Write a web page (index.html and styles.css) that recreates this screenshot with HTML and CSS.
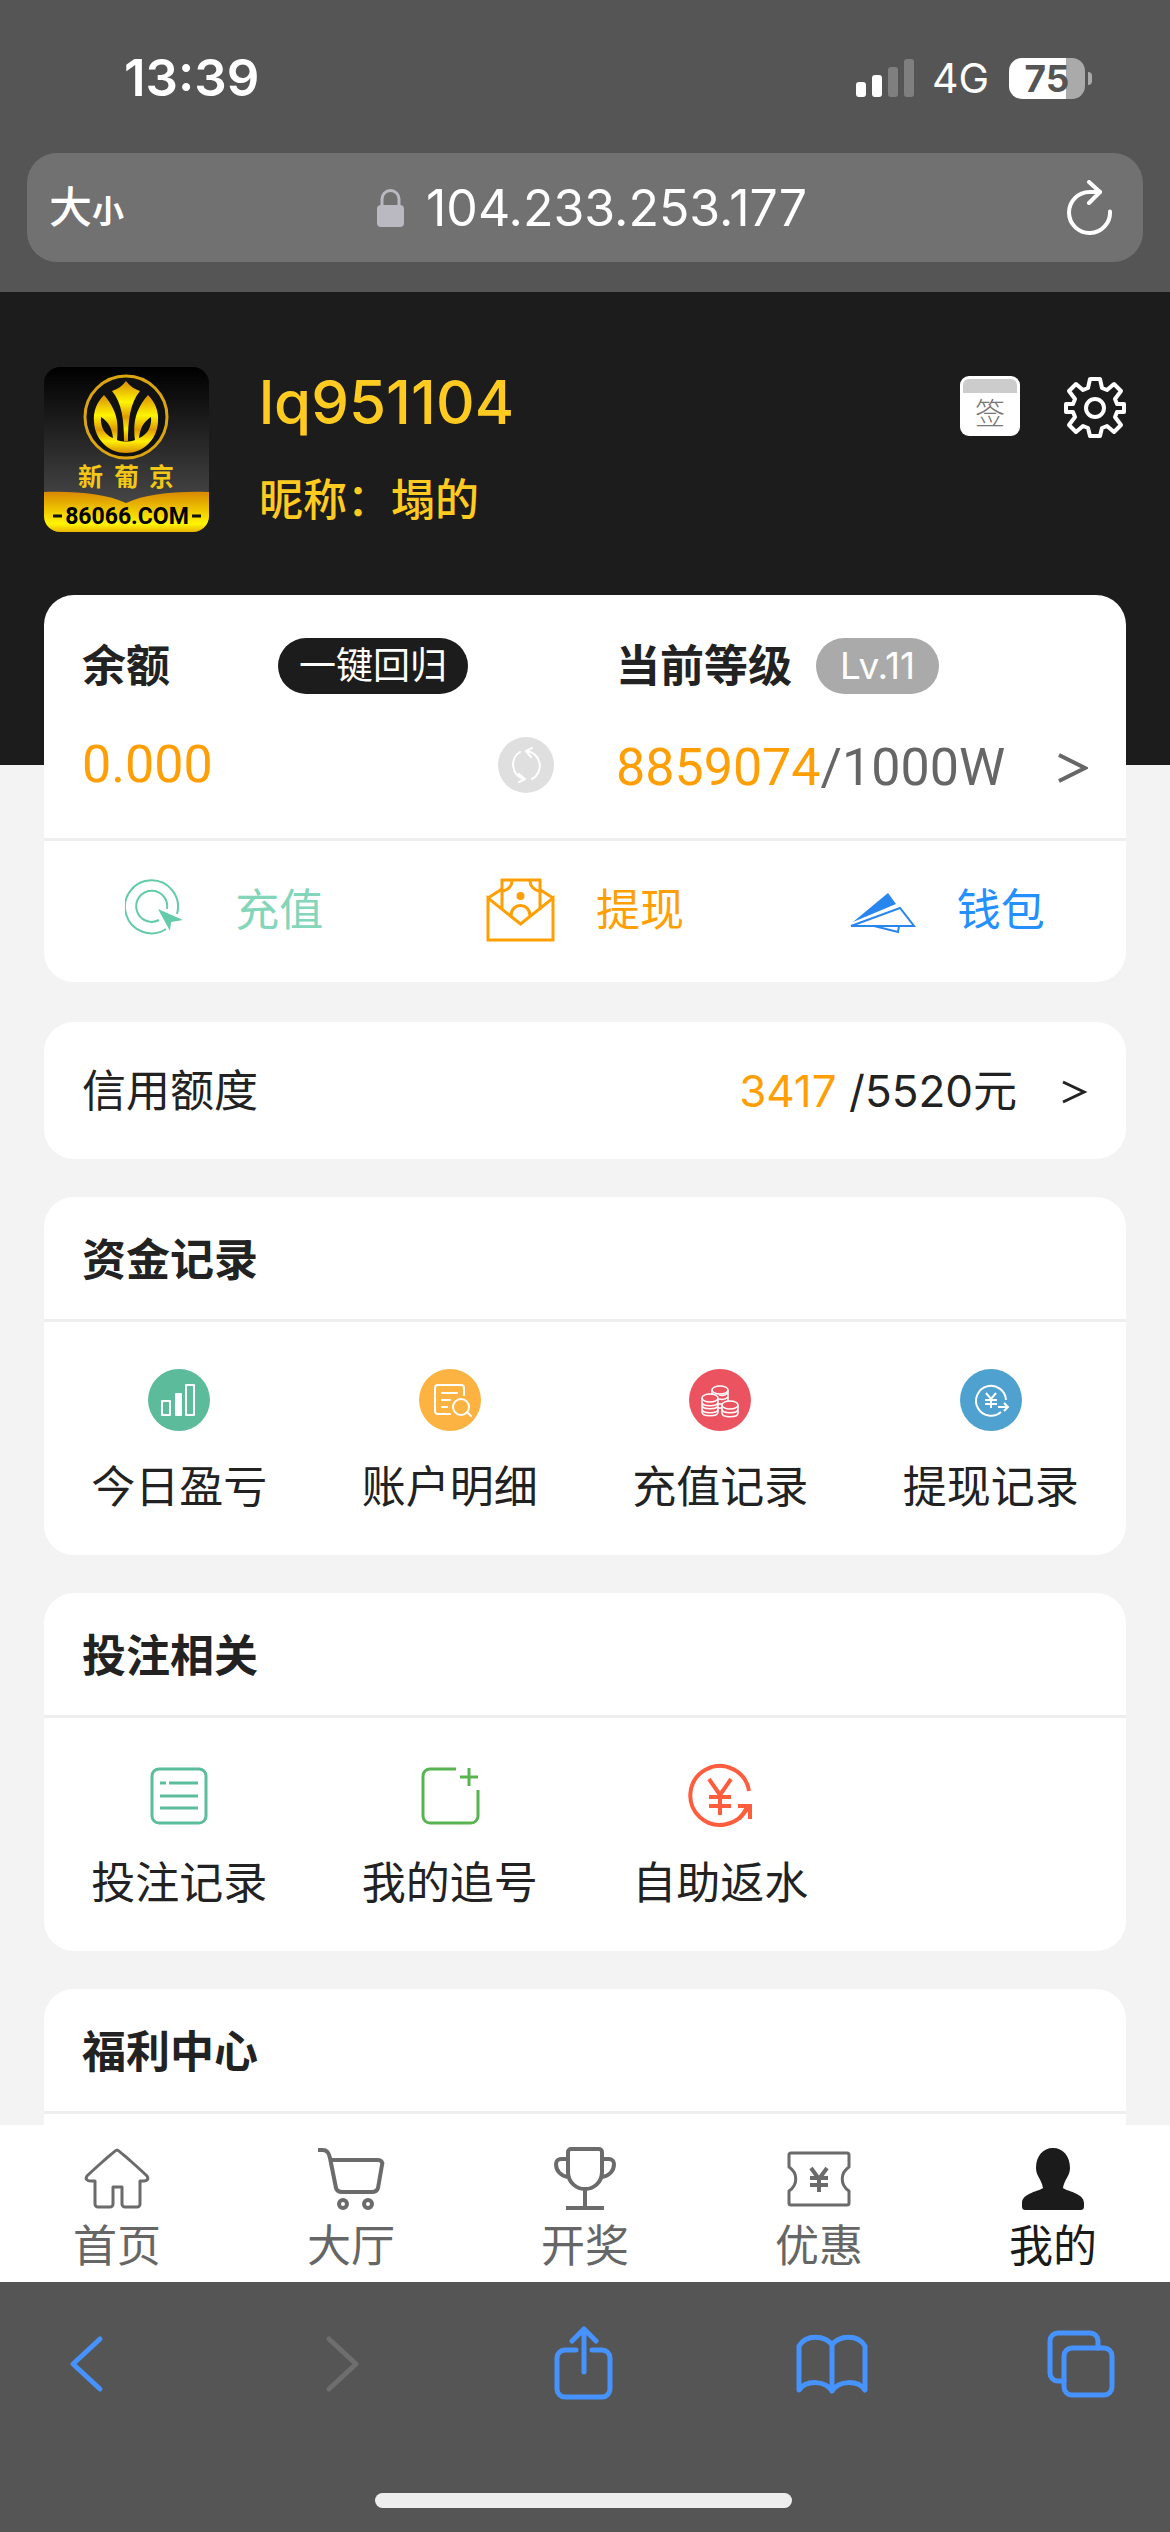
FILE: index.html
```html
<!DOCTYPE html>
<html lang="zh-CN">
<head>
  <meta charset="UTF-8">
  <meta name="viewport" content="width=device-width, initial-scale=1.0">
  <title>我的</title>
  <link rel="stylesheet" href="styles.css">
</head>
<body>

  <div class="browser-top">
    <div class="status-bar">
      <span class="time">13:39</span>
      <div class="status-right">
        <svg class="signal" viewBox="0 0 58 38" fill="#fff">
          <rect x="0" y="23" width="10" height="15" rx="3"/>
          <rect x="16" y="16" width="10" height="22" rx="3"/>
          <rect x="32" y="8" width="10" height="30" rx="3" opacity=".25"/>
          <rect x="48" y="0" width="10" height="38" rx="3" opacity=".25"/>
        </svg>
        <span class="network">4G</span>
        <span class="battery">75</span>
      </div>
    </div>

    <div class="address-bar">
      <button class="text-size" type="button">大<small>小</small></button>
      <label class="address">
        <svg class="lock" viewBox="0 0 27 40">
          <path d="M5 19v-8a8.500 8.500 0 0 1 17 0v8" fill="none" stroke="#bab9c1" stroke-width="3"/>
          <rect x="0" y="17" width="27" height="22" rx="4" fill="#bab9c1"/>
        </svg>
        <input type="text" value="104.233.253.177" aria-label="地址">
      </label>
      <button class="reload" type="button" aria-label="刷新">
        <svg viewBox="0 0 46 56" fill="none" stroke="#fff" stroke-width="4" stroke-linecap="round" stroke-linejoin="round">
          <path d="M43 31.500A20.500 20.500 0 1 1 22.500 12H33"/>
          <path d="M22 2l11 10-11 11"/>
        </svg>
      </button>
    </div>
  </div>

  <main>
    <header class="profile">
      <svg class="avatar" viewBox="0 0 165 165">
        <defs>
          <linearGradient id="night" x1="0" y1="0" x2="0" y2="1">
            <stop offset="0" stop-color="#000"/>
            <stop offset=".8" stop-color="#444"/>
          </linearGradient>
          <linearGradient id="gold" x1="0" y1="0" x2="0" y2="1">
            <stop offset="0" stop-color="#d98e00"/>
            <stop offset=".35" stop-color="#fff500"/>
            <stop offset=".6" stop-color="#e09a00"/>
            <stop offset=".8" stop-color="#fff000"/>
            <stop offset="1" stop-color="#d98e00"/>
          </linearGradient>
          <linearGradient id="ribbon" x1="0" y1="0" x2="0" y2="1">
            <stop offset="0" stop-color="#d98900"/>
            <stop offset=".8" stop-color="#fff500"/>
            <stop offset="1" stop-color="#e8b400"/>
          </linearGradient>
        </defs>
        <rect width="165" height="165" fill="url(#night)"/>
        <circle cx="82" cy="50" r="41" fill="#111" stroke="#dba510" stroke-width="3"/>
        <path fill="url(#gold)" d="M82 14c4 5 8 8 14 10-10 12-12 30-12 50h-4c0-20-2-38-12-50 6-2 10-5 14-10z"/>
        <path fill="url(#gold)" fill-rule="evenodd" d="M60 28c-7 7-11 16-10 27 1 18 15 31 32 31s31-13 32-31c1-11-3-20-10-27-13 15-15 28-13 45-5 2-13 2-18 0 2-17 0-30-13-45zM57 50c8 5 11 12 12 21-8-3-13-11-12-21zM107 50c-8 5-11 12-12 21 8-3 13-11 12-21z"/>
        <g fill="#f2c715" class="logo-name">
          <text x="34" y="119">新</text>
          <text x="70" y="119">葡</text>
          <text x="105" y="119">京</text>
        </g>
        <path fill="url(#ribbon)" d="M0 125c35-1 62 2 82 11 20-9 47-12 83-11v40H0z"/>
        <path stroke="#111" stroke-width="3" d="M9 149h9M148 149h9"/>
        <text class="logo-site" x="83" y="157" text-anchor="middle">86066.COM</text>
      </svg>
      <div class="profile-text">
        <h1>lq951104</h1>
        <p>昵称：塌的</p>
      </div>
      <div class="profile-actions">
        <button class="sign" type="button"><span>签</span></button>
        <button class="settings" type="button" aria-label="设置">
          <svg viewBox="0 0 62 62" fill="none" stroke="#fff" stroke-width="4" stroke-linejoin="round">
            <path d="M26 3h10l2 9 5 2 7-6 7 7-6 8 2 5h7v8h-7l-2 5 6 8-7 7-7-6-5 2-2 8H26l-2-8-5-2-7 6-7-7 6-8-2-5H2v-8h7l2-5-6-8 7-7 7 6 5-2z"/>
            <circle cx="31" cy="32" r="9"/>
          </svg>
        </button>
      </div>
    </header>

    <section class="card balance">
      <div class="balance-grid">
        <div class="row">
          <h2>余额</h2>
          <button class="pill pill-dark" type="button">一键回归</button>
        </div>
        <div class="row level">
          <h2>当前等级</h2>
          <span class="pill pill-gray">Lv.11</span>
        </div>
        <div class="row spread">
          <span class="amount orange">0.000</span>
          <button class="refresh" type="button" aria-label="刷新余额">
            <svg viewBox="0 0 56 56" fill="none" stroke="#fff" stroke-width="2" stroke-linecap="round" stroke-linejoin="round">
              <path d="M22 15a15 15 0 0 0 4 27M34 42a15 15 0 0 0-5-28M21 37l6 5-6 3M34 11l-6 3 5 6"/>
            </svg>
          </button>
        </div>
        <a class="row spread progress" href="#">
          <span class="amount"><span class="orange">8859074</span>/1000W</span>
          <svg class="arrow" viewBox="0 0 30 30"><path d="M1 2l26 13L1 28"/></svg>
        </a>
      </div>
      <nav class="actions">
        <a class="green" href="#">
          <svg viewBox="0 0 70 64" fill="none" stroke="#62cba7" stroke-width="2">
            <path d="M41 51A26.500 26.500 0 1 1 52 36"/>
            <path d="M34 42A15.500 15.500 0 1 1 42 31"/>
            <path fill="#62cba7" stroke="none" d="M33 31l25 11-12 2-1 9z"/>
          </svg>
          充值
        </a>
        <a class="orange" href="#">
          <svg viewBox="0 0 70 64" fill="none" stroke="#ff9f05" stroke-width="3">
            <path d="M2 20v42h65V20L34.500 46zM2 20l14-9M67 20l-14-9M16 32V2h38v30"/>
            <path d="M26 3c0 5-4 9-9 10M44 3c0 5 4 9 9 10M25 38c0-14 19-14 19 0"/>
            <circle cx="34.500" cy="18" r="4" fill="#ff9f05" stroke="none"/>
          </svg>
          提现
        </a>
        <a class="blue" href="#">
          <svg viewBox="0 0 70 64" fill="none" stroke="#2a86ef" stroke-width="2">
            <path fill="#2a86ef" stroke="none" d="M6 44L41 15l8 11z"/>
            <path d="M4 48l49-18 14 18zM27 48l24 6 1-6"/>
          </svg>
          钱包
        </a>
      </nav>
    </section>

    <a class="card credit" href="#">
      <span>信用额度</span>
      <span class="credit-value"><span class="orange">3417</span> /5520元</span>
      <svg class="arrow" viewBox="0 0 30 30"><path d="M5 6l21 10L5 26"/></svg>
    </a>

    <section class="card">
      <h2 class="card-title">资金记录</h2>
      <nav class="menu">
        <a href="#">
          <svg viewBox="0 0 64 64" fill="none" stroke="#fff" stroke-width="2">
            <circle cx="32" cy="32" r="31" fill="#5bbb9b" stroke="none"/>
            <path stroke-linejoin="round" d="M15 33h8v14h-8zM39 17h8v30h-8z"/>
            <rect x="28" y="25" width="7" height="23" rx="1" fill="#fff" stroke="none"/>
          </svg>
          今日盈亏
        </a>
        <a href="#">
          <svg viewBox="0 0 64 64" fill="none" stroke="#fff" stroke-width="2" stroke-linecap="round">
            <circle cx="32" cy="32" r="31" fill="#fcb342" stroke="none"/>
            <path d="M32 46H20a3 3 0 0 1-3-3V20a3 3 0 0 1 3-3h23a3 3 0 0 1 3 3v7M24 25h15M24 32h8M24 39h5M49 44l4 4"/>
            <circle cx="43" cy="39" r="8"/>
          </svg>
          账户明细
        </a>
        <a href="#">
          <svg viewBox="0 0 64 64" fill="none" stroke="#fff" stroke-width="1.500">
            <circle cx="32" cy="32" r="31" fill="#eb5360" stroke="none"/>
            <ellipse cx="32" cy="22" rx="8" ry="4"/>
            <ellipse cx="22" cy="30" rx="8" ry="4"/>
            <ellipse cx="42" cy="37" rx="8" ry="4"/>
            <path d="M24 22v4M40 22v11M31 27c4 1 7 0 9-2M31 31c4 1 7 0 9-2M14 30v14c0 5 16 5 16 0V30M14 34c0 5 16 5 16 0M14 37c0 5 16 5 16 0M14 41c0 5 16 5 16 0M34 37v8c0 5 16 5 16 0v-8M34 41c0 5 16 5 16 0M30 36h4M30 40h4"/>
          </svg>
          充值记录
        </a>
        <a href="#">
          <svg viewBox="0 0 64 64" fill="none" stroke="#fff" stroke-width="2">
            <circle cx="32" cy="32" r="31" fill="#4fa1d0" stroke="none"/>
            <path d="M42 44a15 15 0 1 1 5-12M39 39h10M45 35l4 4-4 4M27 25l5 6 5-6M32 31v9M26 32h12M26 36h12"/>
          </svg>
          提现记录
        </a>
      </nav>
    </section>

    <section class="card">
      <h2 class="card-title">投注相关</h2>
      <nav class="menu">
        <a href="#">
          <svg viewBox="0 0 64 64" fill="none" stroke="#5bbd9d" stroke-width="3">
            <rect x="5" y="5" width="54" height="54" rx="7"/>
            <path d="M13 19h6M22 19h29M13 32h38M13 44h38"/>
          </svg>
          投注记录
        </a>
        <a href="#">
          <svg viewBox="0 0 64 64" fill="none" stroke="#58b450" stroke-width="3">
            <path d="M38 5H12a7 7 0 0 0-7 7v40a7 7 0 0 0 7 7h41a7 7 0 0 0 7-7V26M42 13h18M51 4v18"/>
          </svg>
          我的追号
        </a>
        <a href="#">
          <svg viewBox="0 0 64 64" fill="none" stroke="#ff5d3d" stroke-width="4">
            <path d="M61 27A29.500 29.500 0 1 0 59 43"/>
            <path d="M50 42h12v13M61 43L51 55"/>
            <path stroke-width="4" d="M21 15l11 16 11-16M32 31v20M21 33h22M21 42h22"/>
          </svg>
          自助返水
        </a>
      </nav>
    </section>

    <section class="card">
      <h2 class="card-title">福利中心</h2>
      <nav class="menu"></nav>
    </section>
  </main>

  <nav class="tab-bar">
    <a href="#">
      <svg viewBox="0 0 68 64" fill="none" stroke="#6b6b6b" stroke-width="3" stroke-linejoin="round">
        <path d="M34 3c2 0 28 24 30 26 2 3 0 5-3 5h-4v23a3 3 0 0 1-3 3H42a3 3 0 0 1-3-3V40h-9v17a3 3 0 0 1-3 3H15a3 3 0 0 1-3-3V34H8c-4 0-6-2-4-5C6 27 32 3 34 3z"/>
      </svg>
      首页
    </a>
    <a href="#">
      <svg viewBox="0 0 68 64" fill="none" stroke="#6b6b6b" stroke-width="4" stroke-linejoin="round">
        <path d="M1 3h5c4 0 6 3 7 8l6 30c1 3 3 4 6 4h30c3 0 5-1 6-4l4-23c1-3-1-5-4-5H14"/>
        <circle cx="26" cy="57" r="4"/>
        <circle cx="51" cy="57" r="4"/>
      </svg>
      大厅
    </a>
    <a href="#">
      <svg viewBox="0 0 68 64" fill="none" stroke="#6b6b6b" stroke-width="4" stroke-linejoin="round">
        <path d="M20 2h28a3 3 0 0 1 3 3v20c0 11-9 17-17 17s-17-6-17-17V5a3 3 0 0 1 3-3zM17 12h-7a5 5 0 0 0-5 5c0 7 5 12 12 13M51 12h7a5 5 0 0 1 5 5c0 7-5 12-12 13M34 42v19M15 61h38"/>
      </svg>
      开奖
    </a>
    <a href="#">
      <svg viewBox="0 0 68 64" fill="none" stroke="#6b6b6b" stroke-width="3" stroke-linejoin="round">
        <path d="M6 6h56a2 2 0 0 1 2 2v12c-9 6-9 18 0 24v12a2 2 0 0 1-2 2H6a2 2 0 0 1-2-2V44c9-6 9-18 0-24V8a2 2 0 0 1 2-2z"/>
        <path stroke-width="4" d="M26 21l8 11 8-11M34 32v13M25 31h18M25 38h18"/>
      </svg>
      优惠
    </a>
    <a class="current" href="#">
      <svg viewBox="0 0 68 64" fill="#1b1b1b">
        <path d="M34 1c10 0 17 8 17 20 0 8-6 12-7 20 3 3 21 5 21 15v3c0 3-1 4-4 4H7c-3 0-4-1-4-4v-3c0-10 18-12 21-15-1-8-7-12-7-20C17 9 24 1 34 1z"/>
      </svg>
      我的
    </a>
  </nav>

  <footer class="browser-bottom">
    <div class="toolbar">
      <button type="button" aria-label="后退">
        <svg viewBox="0 0 72 76"><path d="M50 13L23 38l27 25"/></svg>
      </button>
      <button class="disabled" type="button" aria-label="前进" disabled>
        <svg viewBox="0 0 72 76"><path d="M30 13l27 25-27 25"/></svg>
      </button>
      <button type="button" aria-label="分享">
        <svg viewBox="0 0 72 76"><path d="M29 24H18a8 8 0 0 0-8 8v31a8 8 0 0 0 8 8h37a8 8 0 0 0 8-8V32a8 8 0 0 0-8-8H45M37 46V4M25 15L37 3l12 12"/></svg>
      </button>
      <button type="button" aria-label="书签">
        <svg viewBox="0 0 72 76"><path d="M36 19v46M36 19C29 9 10 8 3 20v44c7-10 26-10 33 1 7-11 26-11 33-1V20C62 8 43 9 36 19z"/></svg>
      </button>
      <button type="button" aria-label="标签页">
        <svg viewBox="0 0 72 76"><rect x="20" y="22" width="48" height="47" rx="8"/><path d="M20 55h-6a8 8 0 0 1-8-8V15a8 8 0 0 1 8-8h32a8 8 0 0 1 8 8v7"/></svg>
      </button>
    </div>
    <div class="home-indicator"></div>
  </footer>

</body>
</html>
```
FILE: styles.css
```css
* {
  box-sizing: border-box;
}

body {
  display: flex;
  flex-direction: column;
  height: 100vh;
  margin: 0;
  background-color: #f3f3f3;
  color: #222;
  font-family: Inter, "Noto Sans CJK SC", sans-serif;
  font-size: 44px;
  line-height: 60px;
}

h1, h2, p {
  margin: 0;
}

a {
  color: inherit;
  text-decoration: none;
}

button, input {
  padding: 0;
  border: none;
  background: none;
  color: inherit;
  font: inherit;
}

button {
  cursor: pointer;
}

svg {
  display: block;
  flex: none;
}

.orange {
  color: #ff9f05;
}

.green {
  color: #83d6b9;
}

.blue {
  color: #2490ff;
}

/* browser top */
.browser-top {
  flex: none;
  padding: 48px 27px 30px;
  background-color: #555;
  color: #fff;
}

.status-bar {
  display: flex;
  justify-content: space-between;
  align-items: center;
  padding: 0 58px 0 97px;
  margin-bottom: 45px;
}

.time {
  font-size: 51px;
  font-weight: 600;
}

.status-right {
  display: flex;
  align-items: center;
}

.signal {
  width: 58px;
  height: 38px;
}

.network {
  margin: 0 20px 0 18px;
  font-size: 41px;
}

.battery {
  position: relative;
  width: 76px;
  height: 41px;
  border-radius: 13px;
  background: linear-gradient(to right, #fff 75%, #aaa 75%);
  color: #555;
  font-size: 37px;
  font-weight: 700;
  line-height: 41px;
  text-align: center;
}

.battery::after {
  content: "";
  position: absolute;
  top: 14px;
  right: -7px;
  width: 4px;
  height: 13px;
  border-radius: 0 4px 4px 0;
  background-color: #aaa;
}

.address-bar {
  display: flex;
  justify-content: space-between;
  align-items: center;
  height: 109px;
  padding: 0 30px 0 22px;
  border-radius: 30px;
  background-color: #717171;
}

.text-size {
  padding-top: 4px;
  font-size: 43px;
  font-weight: 500;
}

.text-size small {
  font-size: 32px;
  font-weight: 700;
}

.address {
  display: flex;
  align-items: center;
  gap: 22px;
}

.lock {
  width: 27px;
  height: 40px;
}

.address input {
  width: 388px;
  font-size: 50px;
}

.reload svg {
  width: 46px;
  height: 56px;
}

/* page */
main {
  flex: 1;
  min-height: 0;
  overflow: hidden;
}

.profile {
  display: flex;
  align-items: flex-start;
  padding: 75px 44px 233px;
  background-color: #1c1c1c;
  color: #ffcb20;
}

.avatar {
  width: 165px;
  height: 165px;
  border-radius: 16px;
}

.logo-name {
  font-size: 25px;
  font-weight: 700;
}

.logo-site {
  font-family: Roboto, sans-serif;
  font-size: 23px;
  font-weight: 700;
}

.profile-text {
  flex: 1;
  padding-left: 50px;
}

.profile-text h1 {
  font-size: 60px;
  font-weight: 500;
  line-height: 70px;
}

.profile-text p {
  margin-top: 33px;
  font-weight: 500;
}

.profile-actions {
  display: flex;
  gap: 44px;
  padding-top: 9px;
}

.sign {
  width: 60px;
  height: 60px;
  padding: 3px;
  border-radius: 9px;
  background-color: #fff;
  color: #777;
}

.sign::before {
  content: "";
  display: block;
  height: 14px;
  border-radius: 6px 6px 0 0;
  background-color: #ccc;
}

.sign span {
  display: block;
  font-size: 30px;
  font-weight: 300;
  line-height: 40px;
}

.settings svg {
  width: 62px;
  height: 62px;
}

.card {
  display: block;
  margin: 0 44px 38px;
  border-radius: 30px;
  background-color: #fff;
}

.card h2 {
  font-size: 44px;
  font-weight: 700;
}

.balance {
  margin-top: -170px;
  margin-bottom: 40px;
}

.balance-grid {
  display: grid;
  grid-template-columns: 1fr 1fr;
  gap: 43px 62px;
  padding: 43px 38px 45px;
}

.row {
  display: flex;
  align-items: center;
  gap: 108px;
  height: 56px;
}

.row.level {
  gap: 24px;
}

.row.spread {
  justify-content: space-between;
  gap: 0;
}

.row.progress {
  padding-top: 6px;
}

.pill {
  padding: 0 21px;
  border-radius: 28px;
  color: #fff;
  font-size: 37px;
  line-height: 56px;
}

.pill-dark {
  background-color: #1c1c1c;
}

.pill-gray {
  padding: 0 24px;
  background-color: #aaa;
}

.amount {
  color: #666;
  font-family: Roboto, sans-serif;
  font-size: 52px;
}

.amount.orange {
  color: #ff9f05;
}

.refresh svg {
  width: 56px;
  height: 56px;
  border-radius: 50%;
  background-color: #dfdfdf;
}

.arrow {
  width: 30px;
  height: 30px;
  fill: none;
  stroke: #666;
  stroke-width: 4px;
}

.actions {
  display: grid;
  grid-template-columns: repeat(3, 1fr);
  height: 144px;
  padding-bottom: 4px;
  border-top: 3px solid #eee;
}

.actions a {
  display: flex;
  align-items: center;
  justify-content: center;
  gap: 40px;
}

.actions svg {
  width: 70px;
  height: 64px;
}

.credit {
  display: flex;
  align-items: center;
  gap: 41px;
  height: 137px;
  padding: 0 38px;
}

.credit-value {
  margin-left: auto;
}

.credit .arrow {
  stroke: #222;
  stroke-width: 3px;
}

.card-title {
  padding: 33px 38px 29px;
  border-bottom: 3px solid #eee;
}

.menu {
  display: grid;
  grid-template-columns: repeat(4, 1fr);
  padding: 46px 0 38px;
}

.menu a {
  display: flex;
  flex-direction: column;
  align-items: center;
  gap: 25px;
}

.menu svg {
  width: 64px;
  height: 64px;
}

/* page tabs */
.tab-bar {
  display: grid;
  flex: none;
  grid-template-columns: repeat(5, 1fr);
  padding: 22px 0 6px;
  background-color: #fff;
  color: #666;
}

.tab-bar a {
  display: flex;
  flex-direction: column;
  align-items: center;
  gap: 5px;
}

.tab-bar svg {
  width: 68px;
  height: 64px;
}

.tab-bar .current {
  color: #1b1b1b;
}

/* browser bottom */
.browser-bottom {
  flex: none;
  padding: 44px 54px 24px 50px;
  background-color: #555;
}

.toolbar {
  display: flex;
  justify-content: space-between;
}

.toolbar svg {
  width: 72px;
  height: 76px;
  fill: none;
  stroke: #4693ff;
  stroke-width: 5px;
  stroke-linecap: round;
  stroke-linejoin: round;
}

.toolbar .disabled svg {
  stroke: #6e6e6e;
}

.home-indicator {
  width: 39%;
  width: 417px;
  height: 15px;
  margin: 91px auto 0;
  border-radius: 8px;
  background-color: #eee;
}
```
